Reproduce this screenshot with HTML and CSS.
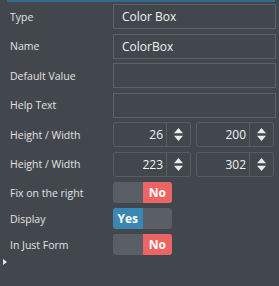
FILE: index.html
```html
<!DOCTYPE html>
<html>
<head>
<meta charset="utf-8">
<link rel="stylesheet" href="styles.css">
</head>
<body>
<div class="panel">
  <div class="topline"></div>
  <div class="form">
    <div class="row"><div class="label">Type</div><div class="input">Color Box</div></div>
    <div class="row"><div class="label">Name</div><div class="input">ColorBox</div></div>
    <div class="row"><div class="label">Default Value</div><div class="input"></div></div>
    <div class="row"><div class="label">Help Text</div><div class="input"></div></div>
    <div class="row"><div class="label">Height / Width</div>
      <div class="pair">
        <div class="spin"><span class="num">26</span><span class="arrows"><svg width="9" height="13" viewBox="0 0 9 13"><polygon points="4.5,0 9,5.2 0,5.2"/><polygon points="0,7.8 9,7.8 4.5,13"/></svg></span></div>
        <div class="spin"><span class="num">200</span><span class="arrows"><svg width="9" height="13" viewBox="0 0 9 13"><polygon points="4.5,0 9,5.2 0,5.2"/><polygon points="0,7.8 9,7.8 4.5,13"/></svg></span></div>
      </div>
    </div>
    <div class="row"><div class="label">Height / Width</div>
      <div class="pair">
        <div class="spin"><span class="num">223</span><span class="arrows"><svg width="9" height="13" viewBox="0 0 9 13"><polygon points="4.5,0 9,5.2 0,5.2"/><polygon points="0,7.8 9,7.8 4.5,13"/></svg></span></div>
        <div class="spin"><span class="num">302</span><span class="arrows"><svg width="9" height="13" viewBox="0 0 9 13"><polygon points="4.5,0 9,5.2 0,5.2"/><polygon points="0,7.8 9,7.8 4.5,13"/></svg></span></div>
      </div>
    </div>
  </div>
  <div class="toggles">
    <div class="trow"><div class="label">Fix on the right</div><div class="toggle"><span class="half"></span><span class="half no">No</span></div></div>
    <div class="trow"><div class="label">Display</div><div class="toggle"><span class="half yes">Yes</span><span class="half"></span></div></div>
    <div class="trow"><div class="label">In Just Form</div><div class="toggle"><span class="half"></span><span class="half no">No</span></div></div>
  </div>
  <div class="caret"></div>
</div>
</body>
</html>
```
FILE: styles.css
```css
html, body {
  margin: 0;
  padding: 0;
  background: #42474e;
}
body {
  width: 279px;
  height: 286px;
  overflow: hidden;
  font-family: "Open Sans", "Noto Sans", sans-serif;
  color: #e4e4e4;
}
.panel {
  position: relative;
  height: 286px;
}
.topline {
  height: 2px;
  margin: 0 4px 0 7px;
  background: #2e6d8f;
}
.form {
  display: flex;
  flex-direction: column;
  gap: 4.6px;
  padding: 2px 3px 0 0;
}
.row, .trow {
  display: grid;
  grid-template-columns: 113px 1fr;
  align-items: center;
}
.row { height: 25px; }
.label {
  padding-left: 10px;
  font-size: 10.5px;
  color: #e2e2e2;
  white-space: nowrap;
}
.input {
  height: 25px;
  box-sizing: border-box;
  border: 1px solid #5d6269;
  padding: 0 8px;
  font-size: 12px;
  line-height: 23px;
  color: #f2f2f2;
}
.pair {
  display: flex;
  gap: 5px;
  padding-right: 2px;
}
.spin {
  flex: 1;
  height: 25px;
  box-sizing: border-box;
  border: 1px solid #585d64;
  border-radius: 3px;
  display: flex;
}
.num {
  flex: 1;
  text-align: right;
  padding-right: 3px;
  font-size: 12px;
  line-height: 23px;
  color: #f2f2f2;
  border-right: 1px solid #585d64;
}
.arrows {
  width: 23px;
  display: flex;
  align-items: center;
  justify-content: center;
}
.arrows svg { fill: #ebebeb; }
.toggles {
  display: flex;
  flex-direction: column;
  gap: 5px;
  padding-top: 5.5px;
}
.trow { height: 21px; }
.toggle {
  width: 59px;
  height: 21px;
  border-radius: 3px;
  overflow: hidden;
  display: flex;
  background: #5a5f66;
}
.half {
  flex: 1;
  font-size: 12px;
  font-weight: 700;
  line-height: 21px;
  text-align: center;
  color: #ffffff;
}
.no { background: #ec6464; }
.yes { background: #3a87b2; }
.caret {
  position: absolute;
  left: 3px;
  top: 259px;
  width: 0;
  height: 0;
  border-top: 3px solid transparent;
  border-bottom: 3px solid transparent;
  border-left: 4px solid #e8e8e8;
}
```
